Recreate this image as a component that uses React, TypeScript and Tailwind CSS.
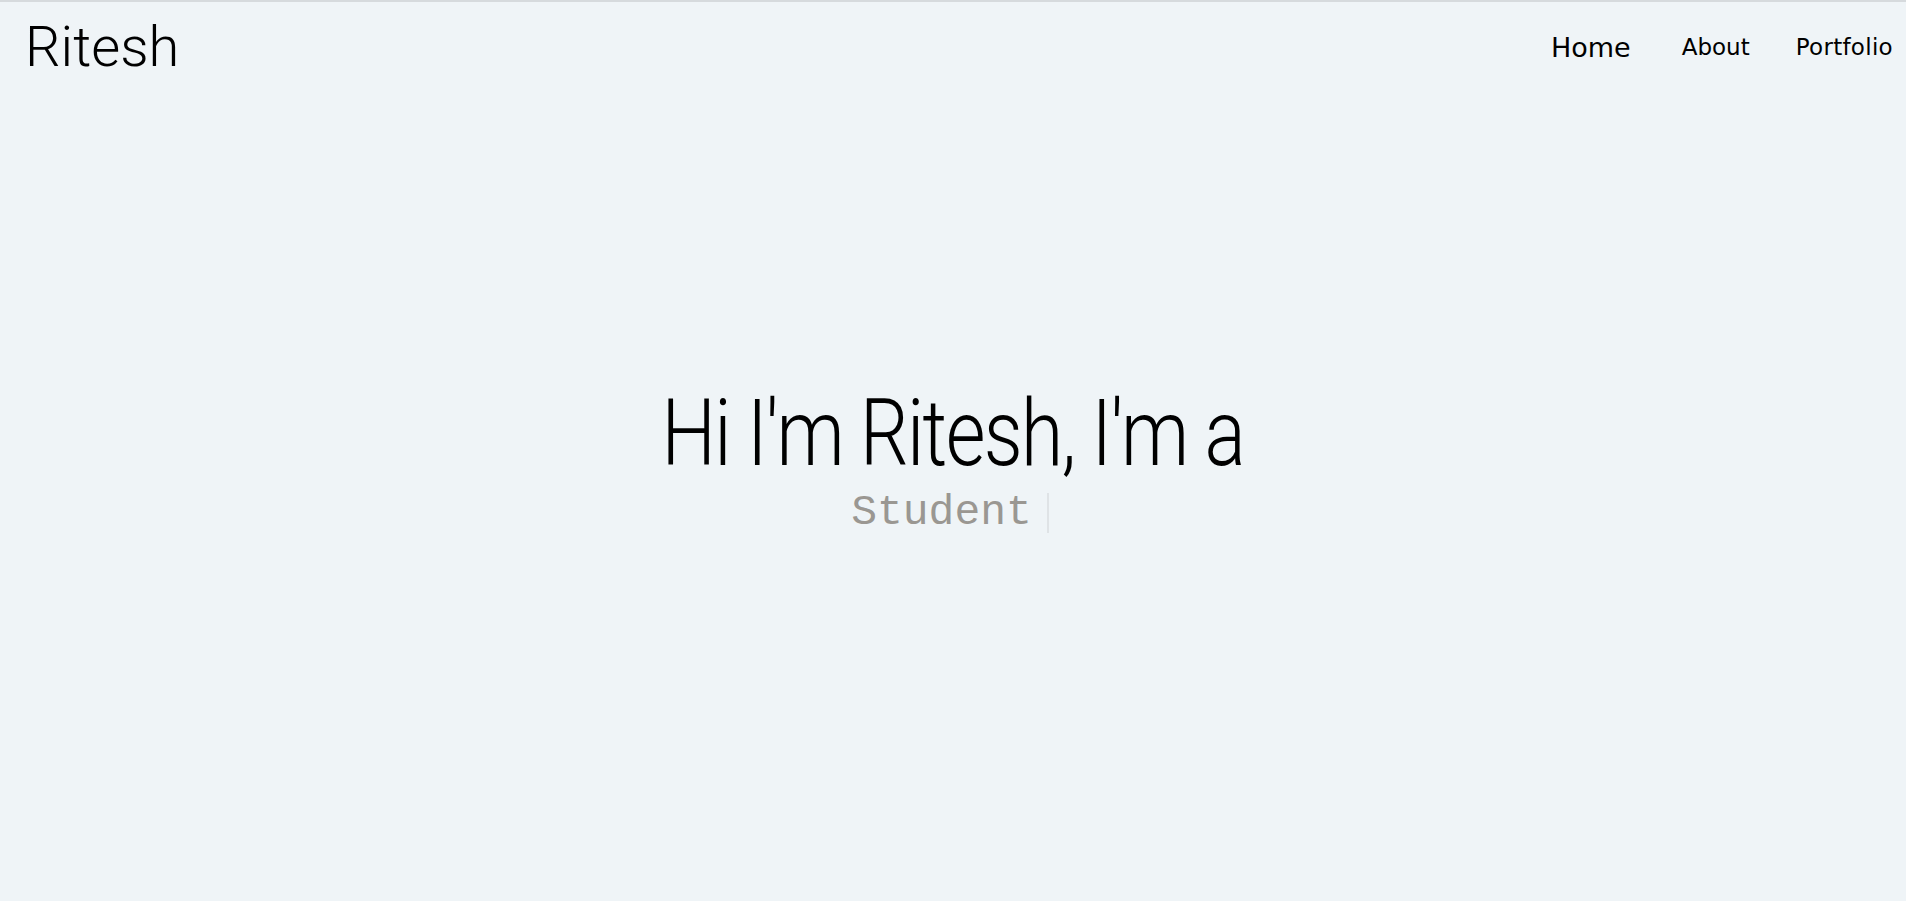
import { useState } from 'react';

function Navbar() {
  return (
    <header className="flex items-center justify-between h-[88px] pl-[25px] pr-[13px]">
      <a className="text-[56px] font-light leading-none text-black font-['Roboto',sans-serif] mt-[1px]">
        Ritesh
      </a>
      <nav className="flex items-center font-['DejaVu_Sans',sans-serif] text-black mt-[3px]">
        <a className="text-[27px] leading-none">Home</a>
        <a className="ml-[51px] text-[23px] leading-none">About</a>
        <a className="ml-[46px] text-[23px] leading-none tracking-[0.3px]">Portfolio</a>
      </nav>
    </header>
  );
}

function Hero() {
  const [word] = useState('Student');
  return (
    <section className="flex flex-col items-center pt-[298px]">
      <h1 className="font-['Roboto',sans-serif] font-light text-[92px] leading-none text-black tracking-[-2px] scale-x-[0.835]">
        Hi I'm Ritesh, I'm a
      </h1>
      <div className="flex items-center mt-[11px] mr-[6px]">
        <span className="font-['Liberation_Mono',monospace] text-[43px] leading-none text-[#9a9792]">
          {word}
        </span>
        <span className="ml-[15px] w-[2px] h-[40px] bg-[#dfe3e6]" />
      </div>
    </section>
  );
}

export default function App() {
  return (
    <div className="min-h-[901px] bg-[#eff4f7] border-t-2 border-[#d6dadd]">
      <Navbar />
      <Hero />
    </div>
  );
}
